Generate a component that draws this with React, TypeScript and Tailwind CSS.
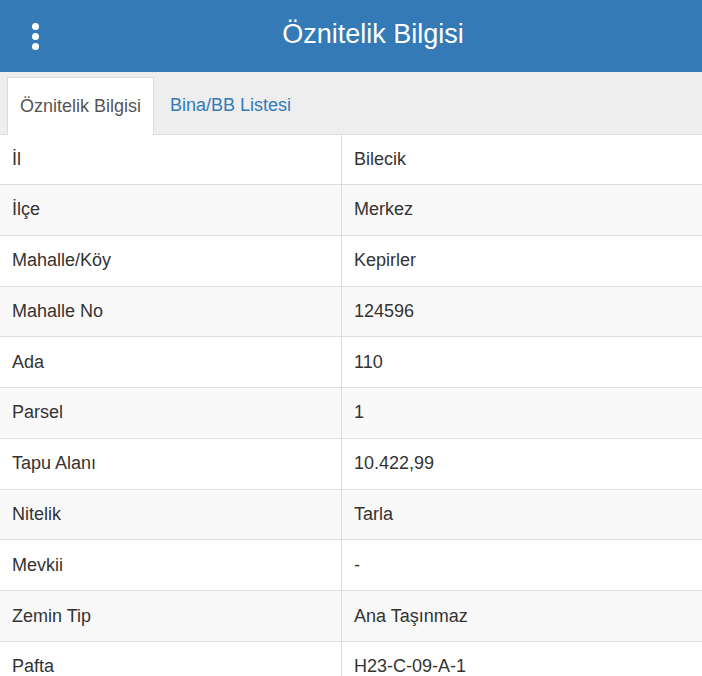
import React from "react";

const rows: [string, string][] = [
  ["İl", "Bilecik"],
  ["İlçe", "Merkez"],
  ["Mahalle/Köy", "Kepirler"],
  ["Mahalle No", "124596"],
  ["Ada", "110"],
  ["Parsel", "1"],
  ["Tapu Alanı", "10.422,99"],
  ["Nitelik", "Tarla"],
  ["Mevkii", "-"],
  ["Zemin Tip", "Ana Taşınmaz"],
  ["Pafta", "H23-C-09-A-1"],
];

export default function App() {
  return (
    <div className="w-[702px] h-[676px] overflow-hidden bg-white text-[#333] font-['Liberation_Sans',Arial,sans-serif]">
      <header className="h-[72px] bg-[#337ab7] flex items-center">
        <div className="w-[70px] flex flex-col items-center gap-[3px] pt-[1px]">
          <span className="block w-[7px] h-[7px] rounded-full bg-white"></span>
          <span className="block w-[7px] h-[7px] rounded-full bg-white"></span>
          <span className="block w-[7px] h-[7px] rounded-full bg-white"></span>
        </div>
        <h1 className="flex-1 text-center text-white text-[27px] leading-none -mt-[4px] pr-[26px]">
          Öznitelik Bilgisi
        </h1>
      </header>
      <nav className="h-[63px] bg-[#eeeeee] flex items-end pl-[7px] border-b border-[#dddddd]">
        <div className="h-[58px] bg-white border border-b-0 border-[#dddddd] px-[12px] flex items-center text-[18px] text-[#555] -mb-[1px]">
          Öznitelik Bilgisi
        </div>
        <div className="h-[57px] px-[16px] flex items-center text-[18px] text-[#337ab7]">
          Bina/BB Listesi
        </div>
      </nav>
      <div>
        {rows.map(([k, v], i) => (
          <div
            key={k}
            className={`flex border-b border-[#dddddd] text-[18px] ${i === 0 ? "h-[50px]" : "h-[50.78px]"} ${i % 2 === 1 ? "bg-[#f9f9f9]" : "bg-white"}`}
          >
            <div className="w-[342px] border-r border-[#dddddd] pl-[12px] flex items-center">{k}</div>
            <div className="flex-1 pl-[12px] flex items-center">{v}</div>
          </div>
        ))}
      </div>
    </div>
  );
}
